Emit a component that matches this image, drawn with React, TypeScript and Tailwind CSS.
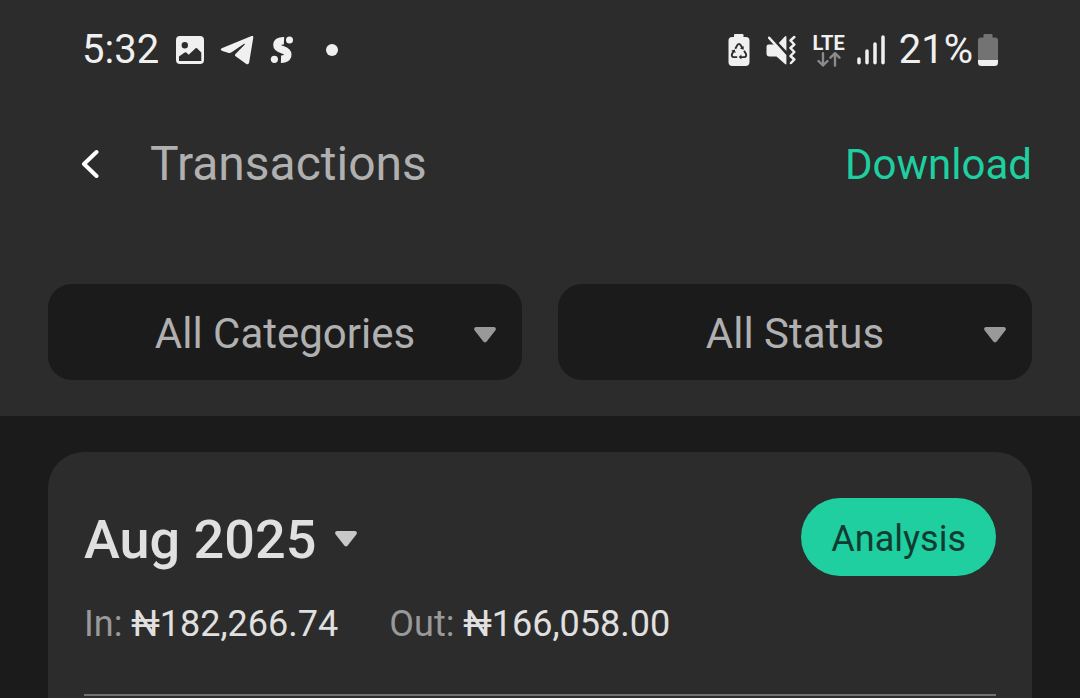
import { useState } from "react";

interface FilterProps {
  label: string;
  options: string[];
}

function Caret({ className }: { className: string }) {
  return (
    <svg className={className} width="22" height="16" viewBox="0 0 22 16" fill="currentColor" aria-hidden="true">
      <path d="M2.2 0H19.8C21.8 0 22.5 2 21.3 3.4L12.7 14.4C11.8 15.6 10.2 15.6 9.3 14.4L.7 3.4C-.5 2 .2 0 2.2 0Z" />
    </svg>
  );
}

function PictureIcon() {
  return (
    <svg width="28" height="28" viewBox="0 0 28 28" aria-hidden="true">
      <path
        fill="currentColor"
        fillRule="evenodd"
        d="M4 0H24A4 4 0 0 1 28 4V24A4 4 0 0 1 24 28H4A4 4 0 0 1 0 24V4A4 4 0 0 1 4 0ZM8.8 6A3.2 3.2 0 1 0 8.8 12.4A3.2 3.2 0 1 0 8.8 6ZM3 20.5V25H25.3V16.5L21 12.2Q20.3 11.6 19.6 12.2L12.7 18.8L10.3 16.5Q9.5 15.8 8.7 16.5Z"
      />
    </svg>
  );
}

function TelegramIcon() {
  return (
    <svg width="34" height="30" viewBox="0 0 34 30" fill="currentColor" aria-hidden="true">
      <path d="M31.5 1.1C32.7.6 33.5 1.1 33.3 2.5L29.2 27.3C28.8 29.3 27.6 29.7 26 28.7L15.6 21.3C14.8 20.6 14.8 19.8 15.5 19L24.6 9.7C25.3 8.9 24.6 8.5 23.7 9.1L11.6 17.2C10.4 18 9.4 18.1 8.1 17.7L2.4 16C.2 15.3.2 13.9 2.3 13Z" />
    </svg>
  );
}

function SIcon() {
  return (
    <svg width="24" height="28" viewBox="0 0 24 28" fill="currentColor" aria-hidden="true">
      <circle cx="19.5" cy="3.9" r="3.5" />
      <circle cx="4.4" cy="23.3" r="3.6" />
      <path
        fill="none"
        stroke="currentColor"
        strokeWidth="7.600"
        d="M14 4.700C9.500 4.500 7 6.300 7 9C7 14.800 17.700 12.500 17.700 18.500C17.700 21.700 15 23.300 11 23.200"
      />
    </svg>
  );
}

function BatteryRecycleIcon() {
  return (
    <svg width="22" height="32" viewBox="0 0 22 32" aria-hidden="true">
      <path
        fill="currentColor"
        d="M7 0H14.500Q15.500 0 15.500 1V3H18A3.500 3.500 0 0 1 21.500 6.500V28A4 4 0 0 1 17.500 32H4.500A4 4 0 0 1 .5 28V6.500A3.500 3.500 0 0 1 4 3H6V1Q6 0 7 0Z"
      />
      <g fill="none" stroke="#2c2c2c" strokeWidth="1.900" strokeLinejoin="round">
        <path d="M7.300 14.800L9.300 11.100Q11 8.700 12.700 11.100L14.300 14" />
        <path d="M16.100 16.800L18 20Q18.800 23 16.200 23.100H12.500" />
        <path d="M9.200 23.100H5.800Q3.200 23 4 20L5.600 17.200" />
      </g>
      <path fill="#2c2c2c" d="M15.700 11.900V15.700L12 14.600ZM13.400 20.400V25.600L10.700 23.100ZM3 16.700L6.700 15.500L7.700 19.100Z" />
    </svg>
  );
}

function MuteIcon() {
  return (
    <svg width="30" height="32" viewBox="0 0 30 32" aria-hidden="true">
      <path
        fill="currentColor"
        d="M2.500 10.500H9.500L20.400 22.500V29.500Q20.400 31 19 30L10.500 22.500H3.500Q.5 22.500 .5 19.500V12.500Q.5 10.500 2.500 10.500ZM12.800 9L18.800 2.400Q20.400 1.200 20.400 3V17Z"
      />
      <g fill="none" stroke="currentColor" strokeWidth="2.500" strokeLinecap="round" strokeLinejoin="round">
        <path d="M3.200 3.800L19.200 21.500" />
        <path d="M28.300 3L24.500 6.500L28.300 10.500L24.500 14L28.300 18L24.500 22L28.300 25.500L25 29" />
      </g>
    </svg>
  );
}

function DataArrows() {
  return (
    <svg width="24" height="15" viewBox="0 0 24 15" fill="none" stroke="#8b8b8b" strokeWidth="2.400" strokeLinecap="round" strokeLinejoin="round" aria-hidden="true">
      <path d="M6 1.200V13.500M1.500 9L6 13.500L10.500 9M18 13.500V1.200M13.500 5.700L18 1.200L22.500 5.700" />
    </svg>
  );
}

function SignalIcon() {
  return (
    <svg width="28" height="30" viewBox="0 0 28 30" stroke="currentColor" strokeWidth="3.500" strokeLinecap="round" aria-hidden="true">
      <path d="M2 24V27.800M10 16V27.800M18 9V27.800M26 2V27.800" />
    </svg>
  );
}

function BatteryIcon() {
  return (
    <svg width="20" height="32" viewBox="0 0 20 32" aria-hidden="true">
      <path
        fill="#737373"
        d="M6.500 0H13.500Q14.500 0 14.500 1V3.500H17A3 3 0 0 1 20 6.500V26H0V6.500A3 3 0 0 1 3 3.500H5.500V1Q5.500 0 6.500 0Z"
      />
      <path fill="currentColor" d="M0 26H20V28.500A3.500 3.500 0 0 1 16.500 32H3.500A3.500 3.500 0 0 1 0 28.500Z" />
    </svg>
  );
}

function StatusBar() {
  return (
    <div className="flex h-[100px] items-center justify-between px-[82px] text-[40px] leading-none text-[#f0f0f0]">
      <div className="flex items-center">
        <span>5:32</span>
        <div className="ml-[17px] flex items-center gap-4">
          <PictureIcon />
          <TelegramIcon />
          <SIcon />
        </div>
        <span className="ml-8 size-3 rounded-full bg-[#f0f0f0]" />
      </div>
      <div className="flex items-center">
        <BatteryRecycleIcon />
        <div className="ml-4">
          <MuteIcon />
        </div>
        <div className="ml-4 flex flex-col items-center text-xl leading-[18px] font-bold">
          <span>LTE</span>
          <DataArrows />
        </div>
        <div className="ml-3">
          <SignalIcon />
        </div>
        <span className="ml-[14px]">21%</span>
        <div className="ml-[5px]">
          <BatteryIcon />
        </div>
      </div>
    </div>
  );
}

function Filter({ label, options }: FilterProps) {
  const [value, setValue] = useState(options[0]);

  return (
    <div className="relative flex-1 text-[#b0b0b0]">
      <select
        aria-label={label}
        className="block h-24 w-full appearance-none rounded-3xl bg-[#1b1b1b] pt-0.5 text-center text-[42px] [text-align-last:center]"
        value={value}
        onChange={(e) => setValue(e.target.value)}
      >
        {options.map((item) => (
          <option key={item}>{item}</option>
        ))}
      </select>
      <Caret className="pointer-events-none absolute top-[43px] right-[26px] text-[#999999]" />
    </div>
  );
}

function Total({ label, amount }: { label: string; amount: string }) {
  return (
    <p>
      <span className="text-[#999999]">{label}:</span> {amount}
    </p>
  );
}

export default function App() {
  const [month, setMonth] = useState("Aug 2025");

  return (
    <div className="flex min-h-screen flex-col bg-[#1b1b1b] font-[Roboto,'Noto_Sans',sans-serif]">
      {/* header */}
      <header className="bg-[#2c2c2c] pb-9">
        <StatusBar />
        <div className="flex h-32 items-center justify-between pr-12 pl-[81px]">
          <div className="flex items-center">
            <button type="button" aria-label="Back" className="text-white">
              <svg width="18" height="30" viewBox="0 0 18 30" fill="none" stroke="currentColor" strokeWidth="4" strokeLinecap="round" strokeLinejoin="round">
                <path d="M15.500 3L3 15L15.500 27" />
              </svg>
            </button>
            <h1 className="ml-[51px] text-5xl text-[#b0b0b0]">Transactions</h1>
          </div>
          <button type="button" className="text-[42px] text-[#1fcfa0]">
            Download
          </button>
        </div>
        <div className="mt-14 flex gap-9 px-12">
          <Filter label="Category" options={["All Categories"]} />
          <Filter label="Status" options={["All Status"]} />
        </div>
      </header>
      {/* month summary */}
      <main className="flex flex-1 flex-col px-12 pt-9">
        <section className="flex-1 rounded-t-[36px] bg-[#2c2c2c] px-9 pt-[46px]">
          <div className="flex items-center justify-between">
            <div className="flex h-[78px] items-center pt-1 text-[#e0e0e0]">
              <select
                aria-label="Month"
                className="appearance-none text-[54px] font-medium"
                value={month}
                onChange={(e) => setMonth(e.target.value)}
              >
                <option>Aug 2025</option>
              </select>
              <Caret className="pointer-events-none ml-[18px] text-[#c8c8c8]" />
            </div>
            <button type="button" className="h-[78px] rounded-full bg-[#1fcfa0] px-[30px] pt-1 text-4xl text-[#123c31]">
              Analysis
            </button>
          </div>
          <div className="mt-6 flex gap-[51px] text-4xl leading-[48px] text-[#e0e0e0]">
            <Total label="In" amount="₦182,266.74" />
            <Total label="Out" amount="₦166,058.00" />
          </div>
          <hr className="mt-[46px] border-t-2 border-[#737373]" />
        </section>
      </main>
    </div>
  );
}
